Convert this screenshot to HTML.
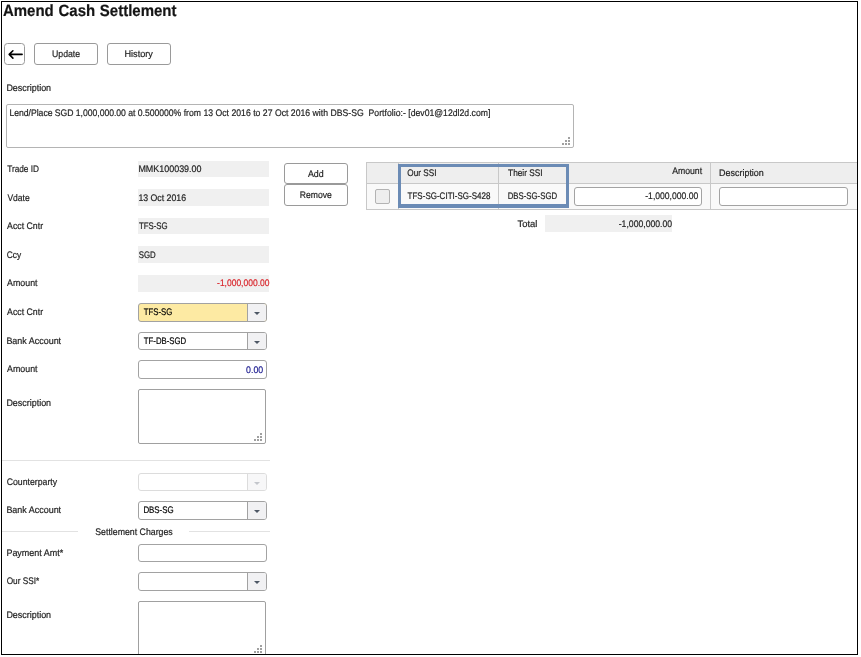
<!DOCTYPE html>
<html lang="en">
<head>
<meta charset="utf-8">
<title>Amend Cash Settlement</title>
<style>
html,body{margin:0;padding:0;background:#fff;}
body{width:861px;height:657px;overflow:hidden;position:relative;font-family:"Liberation Sans",Arial,sans-serif;}
#page{position:absolute;left:0;top:0;width:861px;height:657px;overflow:hidden;background:#fff;}
#frame{position:absolute;left:1px;top:1px;width:857px;height:654px;border:1px solid #000;box-sizing:border-box;}
.t{margin:0;padding:0;font-weight:normal;-webkit-text-stroke:0.2px;text-rendering:geometricPrecision;position:absolute;white-space:pre;line-height:20px;height:20px;transform-origin:0 0;}
.b{position:absolute;box-sizing:border-box;}
.btn{border:1px solid #9a9a9a;border-radius:3px;background:#fff;}
.ro{background:#f0f0f0;}
.inp{border:1px solid #a3a3a3;border-radius:3px;background:#fff;}
.combo{border:1px solid #a2a2a2;border-radius:3px;background:#fff;}
.combo .dd{position:absolute;right:0;top:0;bottom:0;width:18px;border-left:1px solid #a2a2a2;background:#f1f1f3;border-radius:0 2px 2px 0;}
.combo .dd:after{content:"";position:absolute;left:6px;top:7.5px;border-left:3px solid transparent;border-right:3px solid transparent;border-top:3px solid #4d5765;}
.combo.dis{border-color:#dcdcdc;}
.combo.dis .dd{border-left-color:#dcdcdc;background:#f7f7f8;}
.combo.dis .dd:after{border-top-color:#c3c6cb;}
.ta{border:1px solid #b4b4b4;border-radius:2px;background:#fff;}
.ta.sm{border-color:#a0a0a0;}
.grip{position:absolute;right:3px;bottom:2px;width:8px;height:8px;}
.grip i{position:absolute;width:2px;height:2px;background:#a0a0a0;}
.hl{background:#e2e2e2;height:1px;}
#txt{position:absolute;left:0;top:0;width:861px;height:657px;will-change:transform;}

</style>
</head>
<body>
<div id="page">
<!-- toolbar -->
<div class="b btn" style="left:4px;top:43px;width:21px;height:22px;border-radius:3.5px"></div>
<svg class="b" style="left:4px;top:43px" width="21" height="22" viewBox="4 43 21 22"><path d="M22.1 54.4H9.3M12.9 50.8L9.2 54.4l3.7 3.7" fill="none" stroke="#000" stroke-width="1.6" stroke-linecap="round" stroke-linejoin="round"/></svg>
<div class="b btn" style="left:34px;top:43px;width:64px;height:22px"></div>
<div class="b btn" style="left:107px;top:43px;width:64px;height:22px"></div>
<!-- description textarea -->
<div class="b ta" style="left:6px;top:104px;width:568px;height:44px"><div class="grip"><i style="left:6px;top:0"></i><i style="left:3px;top:3px"></i><i style="left:6px;top:3px"></i><i style="left:0;top:6px"></i><i style="left:3px;top:6px"></i><i style="left:6px;top:6px"></i></div></div>
<!-- read only fields -->
<div class="b ro" style="left:138px;top:161px;width:131px;height:16px"></div>
<div class="b ro" style="left:138px;top:189px;width:131px;height:17px"></div>
<div class="b ro" style="left:138px;top:218px;width:131px;height:16px"></div>
<div class="b ro" style="left:138px;top:246px;width:131px;height:17px"></div>
<div class="b ro" style="left:138px;top:275px;width:131px;height:17px"></div>
<!-- editable fields -->
<div class="b combo" style="left:138px;top:303px;width:129px;height:19px;background:#fdeaa3"><div class="dd"></div></div>
<div class="b combo" style="left:138px;top:332px;width:129px;height:18px"><div class="dd"></div></div>
<div class="b inp" style="left:138px;top:360px;width:129px;height:19px"></div>
<div class="b ta sm" style="left:138px;top:389px;width:128px;height:55px"><div class="grip"><i style="left:6px;top:0"></i><i style="left:3px;top:3px"></i><i style="left:6px;top:3px"></i><i style="left:0;top:6px"></i><i style="left:3px;top:6px"></i><i style="left:6px;top:6px"></i></div></div>
<div class="b hl" style="left:2px;top:460px;width:268px"></div>
<div class="b combo dis" style="left:138px;top:473px;width:129px;height:18px"><div class="dd"></div></div>
<div class="b combo" style="left:138px;top:501px;width:129px;height:19px"><div class="dd"></div></div>
<div class="b hl" style="left:2px;top:531px;width:76px"></div>
<div class="b hl" style="left:189px;top:531px;width:81px"></div>
<div class="b inp" style="left:138px;top:544px;width:129px;height:18px"></div>
<div class="b combo" style="left:138px;top:572px;width:129px;height:19px"><div class="dd"></div></div>
<div class="b ta sm" style="left:138px;top:601px;width:128px;height:55px"><div class="grip"><i style="left:6px;top:0"></i><i style="left:3px;top:3px"></i><i style="left:6px;top:3px"></i><i style="left:0;top:6px"></i><i style="left:3px;top:6px"></i><i style="left:6px;top:6px"></i></div></div>
<!-- add / remove -->
<div class="b btn" style="left:284px;top:163px;width:64px;height:21px"></div>
<div class="b btn" style="left:284px;top:184px;width:64px;height:22px"></div>
<!-- grid -->
<div class="b" style="left:366px;top:162px;width:495px;height:48px;border:1px solid #c8c8c8;border-right:0;background:#f9f9f9">
  <div class="b" style="left:0;top:0;width:494px;height:20px;background:#eee"></div>
  <div class="b" style="left:0;top:20px;width:494px;height:1px;background:#c8c8c8"></div>
  <div class="b" style="left:31px;top:0;width:1px;height:46px;background:#c8c8c8"></div>
  <div class="b" style="left:131px;top:0;width:1px;height:46px;background:#c8c8c8"></div>
  <div class="b" style="left:343px;top:0;width:1px;height:46px;background:#c8c8c8"></div>
</div>
<div class="b" style="left:375px;top:189px;width:15px;height:15px;border:1px solid #b3b3b3;border-radius:2px;background:#eee"></div>
<div class="b" style="left:398px;top:164px;width:171px;height:44px;border:3px solid #6b8bb5;border-bottom-width:4px"></div>
<div class="b inp" style="left:574px;top:187px;width:128px;height:19px"></div>
<div class="b inp" style="left:719px;top:187px;width:129px;height:19px"></div>
<div class="b ro" style="left:545px;top:215px;width:127px;height:17px"></div>

<div id="txt">
<h1 class="t" style="left:2px;top:1px;font-size:16.3px;font-weight:bold;color:#151515;word-spacing:0.64px;transform:translateX(0.97px) scaleX(0.92)">Amend Cash Settlement</h1>
<span class="t" style="left:52px;top:45px;font-size:9.5px;color:#1e1e1e;transform:translateX(0.01px) scaleX(0.9186)">Update</span>
<span class="t" style="left:124px;top:45px;font-size:9.5px;color:#1e1e1e;transform:translateX(0.48px) scaleX(0.9600)">History</span>
<label class="t" style="left:6px;top:79px;font-size:9.5px;color:#1e1e1e;transform:translateX(0.39px) scaleX(0.9405)">Description</label>
<span class="t" style="left:9px;top:104px;font-size:9.5px;color:#1e1e1e;transform:translateX(0.52px) scaleX(0.9101)"><span style="letter-spacing:-0.037px">Lend/Place SGD 1,000,000.00 at 0.500000%</span><span style="letter-spacing:0.0216px"> from 13 Oct 2016 to 27 Oct 2016 with DBS-SG  Portfolio:- [dev01@12dl2d.com]</span></span>
<label class="t" style="left:7px;top:160px;font-size:9.5px;color:#1e1e1e;transform:translateX(0.18px) scaleX(0.8694)">Trade ID</label>
<label class="t" style="left:7px;top:189px;font-size:9.5px;color:#1e1e1e;transform:translateX(0.40px) scaleX(0.8980)">Vdate</label>
<label class="t" style="left:7px;top:217px;font-size:9.5px;color:#1e1e1e;transform:translateX(0.10px) scaleX(0.9205)">Acct Cntr</label>
<label class="t" style="left:6px;top:246px;font-size:9.5px;color:#1e1e1e;transform:translateX(0.66px) scaleX(0.8825)">Ccy</label>
<label class="t" style="left:7px;top:274px;font-size:9.5px;color:#1e1e1e;transform:translateX(0.10px) scaleX(0.9282)">Amount</label>
<label class="t" style="left:7px;top:303px;font-size:9.5px;color:#1e1e1e;transform:translateX(0.10px) scaleX(0.9205)">Acct Cntr</label>
<label class="t" style="left:6px;top:332px;font-size:9.5px;color:#1e1e1e;transform:translateX(0.39px) scaleX(0.9415)">Bank Account</label>
<label class="t" style="left:7px;top:360px;font-size:9.5px;color:#1e1e1e;transform:translateX(0.10px) scaleX(0.9282)">Amount</label>
<label class="t" style="left:6px;top:394px;font-size:9.5px;color:#1e1e1e;transform:translateX(0.39px) scaleX(0.9405)">Description</label>
<label class="t" style="left:6px;top:473px;font-size:9.5px;color:#1e1e1e;transform:translateX(0.64px) scaleX(0.9193)">Counterparty</label>
<label class="t" style="left:6px;top:501px;font-size:9.5px;color:#1e1e1e;transform:translateX(0.39px) scaleX(0.9415)">Bank Account</label>
<span class="t" style="left:95px;top:523px;font-size:9.5px;color:#1e1e1e;transform:translateX(0.24px) scaleX(0.9225)">Settlement Charges</span>
<label class="t" style="left:6px;top:544px;font-size:9.5px;color:#1e1e1e;transform:translateX(0.39px) scaleX(0.9451)">Payment Amt*</label>
<label class="t" style="left:6px;top:572px;font-size:9.5px;color:#1e1e1e;transform:translateX(0.66px) scaleX(0.8707)">Our SSI*</label>
<label class="t" style="left:6px;top:606px;font-size:9.5px;color:#1e1e1e;transform:translateX(0.39px) scaleX(0.9405)">Description</label>
<span class="t" style="left:138px;top:160px;font-size:9.5px;color:#1e1e1e;transform:translateX(0.39px) scaleX(0.9409)">MMK100039.00</span>
<span class="t" style="left:138px;top:189px;font-size:9.5px;color:#1e1e1e;transform:translateX(0.41px) scaleX(0.9202)">13 Oct 2016</span>
<span class="t" style="left:138px;top:217px;font-size:9.5px;color:#1e1e1e;transform:translateX(0.89px) scaleX(0.8265)">TFS-SG</span>
<span class="t" style="left:138px;top:246px;font-size:9.5px;color:#1e1e1e;transform:translateX(0.69px) scaleX(0.8253)">SGD</span>
<span class="t" style="left:217px;top:274px;font-size:9.5px;color:#d9262c;transform:translateX(0.05px) scaleX(0.8935)">-1,000,000.00</span>
<span class="t" style="left:143px;top:303px;font-size:9.5px;color:#000;transform:translateX(0.79px) scaleX(0.8206)">TFS-SG</span>
<span class="t" style="left:143px;top:332px;font-size:9.5px;color:#000;transform:translateX(0.80px) scaleX(0.8196)">TF-DB-SGD</span>
<span class="t" style="left:246px;top:361px;font-size:9.5px;color:#1b1b8f;transform:translateX(0.07px) scaleX(0.9222)">0.00</span>
<span class="t" style="left:143px;top:501px;font-size:9.5px;color:#000;transform:translateX(0.38px) scaleX(0.8314)">DBS-SG</span>
<span class="t" style="left:307px;top:165px;font-size:9.5px;color:#1e1e1e;transform:translateX(0.90px) scaleX(0.9292)">Add</span>
<span class="t" style="left:299px;top:186px;font-size:9.5px;color:#1e1e1e;transform:translateX(0.82px) scaleX(0.9051)">Remove</span>
<span class="t" style="left:407px;top:164px;font-size:9.5px;color:#1e1e1e;transform:translateX(0.37px) scaleX(0.8615)">Our SSI</span>
<span class="t" style="left:508px;top:164px;font-size:9.5px;color:#1e1e1e;transform:translateX(0.08px) scaleX(0.8701)">Their SSI</span>
<span class="t" style="left:672px;top:162px;font-size:9.5px;color:#1e1e1e;transform:translateX(0.20px) scaleX(0.9130)">Amount</span>
<span class="t" style="left:719px;top:164px;font-size:9.5px;color:#1e1e1e;transform:translateX(0.09px) scaleX(0.9405)">Description</span>
<span class="t" style="left:407px;top:187px;font-size:9.5px;color:#1e1e1e;transform:translateX(0.59px) scaleX(0.8431)">TFS-SG-CITI-SG-S428</span>
<span class="t" style="left:507px;top:187px;font-size:9.5px;color:#1e1e1e;transform:translateX(0.68px) scaleX(0.8220)">DBS-SG-SGD</span>
<span class="t" style="left:645px;top:187px;font-size:9.5px;color:#1e1e1e;transform:translateX(0.25px) scaleX(0.9039)">-1,000,000.00</span>
<span class="t" style="left:517px;top:215px;font-size:9.5px;color:#1e1e1e;transform:translateX(0.55px) scaleX(0.9922)">Total</span>
<span class="t" style="left:618px;top:215px;font-size:9.5px;color:#1e1e1e;transform:translateX(0.74px) scaleX(0.9108)">-1,000,000.00</span>
</div>
<!-- white out beyond frame then frame on top -->
<div class="b" style="left:858px;top:0;width:3px;height:657px;background:#fff"></div>
<div class="b" style="left:0;top:655px;width:861px;height:2px;background:#fff"></div>
<div id="frame"></div>

</div>
</body>
</html>
